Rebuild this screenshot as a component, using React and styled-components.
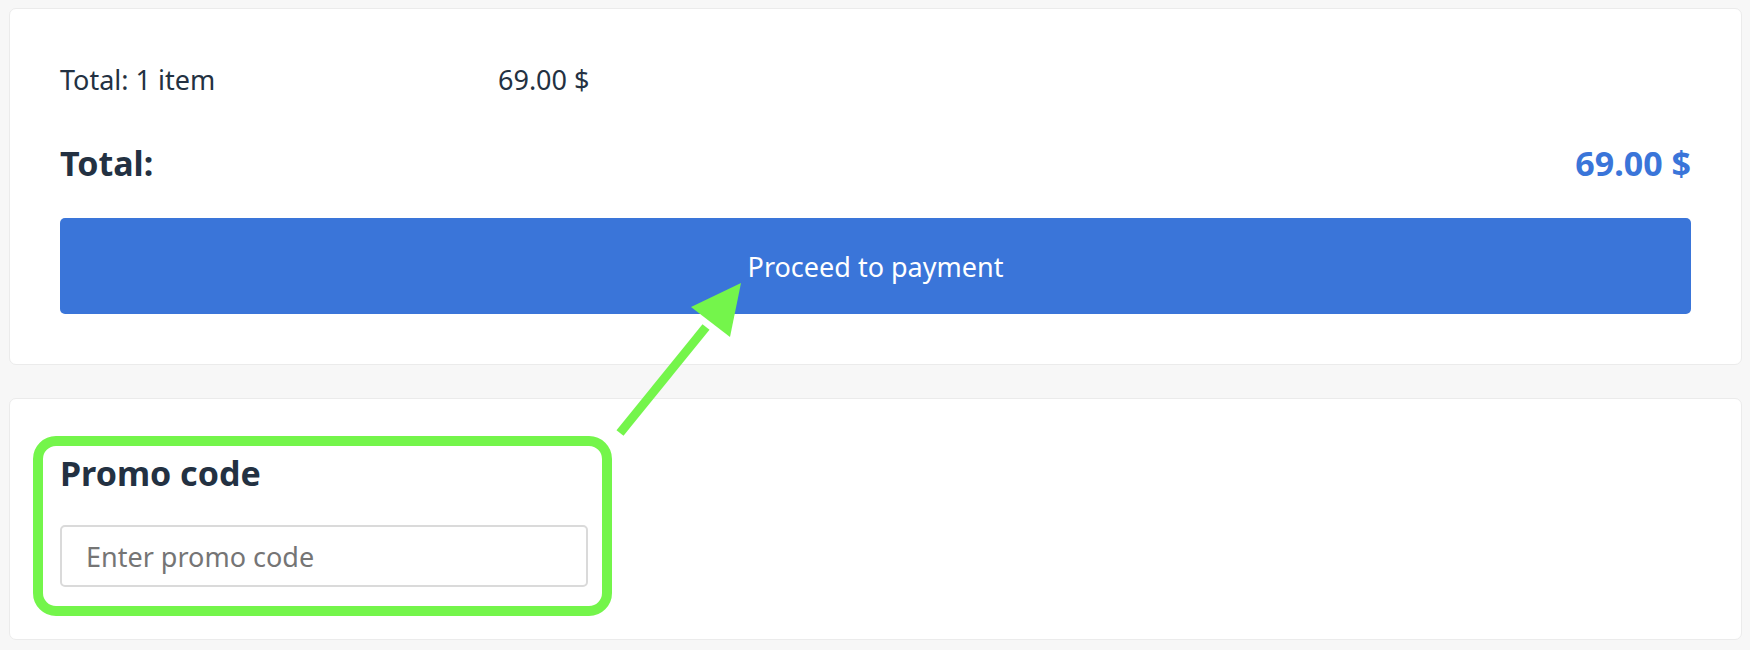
import styled, { createGlobalStyle } from "styled-components";

const GlobalStyle = createGlobalStyle`
  body {
    margin: 0;
    background: #f7f7f7;
    font-family: "Noto Sans", "Open Sans", sans-serif;
    color: #233142;
  }
`;

const Page = styled.div`
  position: relative;
  padding: 8px 8px 8px 9px;
  display: flex;
  flex-direction: column;
  gap: 33px;
`;

const Card = styled.div`
  background: #fff;
  border: 1px solid #ebebeb;
  border-radius: 7px;
  padding: ${(p) => (p.compact ? "48px 50px 52px" : "50px")};
`;

const SummaryRow = styled.div`
  display: grid;
  grid-template-columns: 438px auto;
  font-size: 27px;
  line-height: 42px;
`;

const TotalRow = styled.div`
  display: flex;
  justify-content: space-between;
  margin-top: 36px;
  font-size: 34px;
  font-weight: 700;
  line-height: 52px;
`;

const Amount = styled.span`
  color: ${(p) => (p.accent ? "#3a75d9" : "inherit")};
`;

const PayButton = styled.button`
  display: block;
  width: 100%;
  height: 96px;
  margin-top: 29px;
  background: #3a75d9;
  color: #fff;
  border: none;
  border-radius: 5px;
  font-family: inherit;
  font-size: 27px;
  cursor: pointer;
`;

const PromoTitle = styled.h3`
  margin: 0;
  font-size: 34px;
  font-weight: 700;
  line-height: 52px;
`;

const PromoInput = styled.input`
  display: block;
  box-sizing: border-box;
  width: 528px;
  height: 62px;
  margin-top: 26px;
  padding: 0 24px;
  border: 2px solid #dadada;
  border-radius: 5px;
  font-family: inherit;
  font-size: 27px;
  color: #233142;

  &::placeholder {
    color: #757575;
  }
`;

const Overlay = styled.svg`
  position: absolute;
  top: 0;
  left: 0;
  pointer-events: none;
`;

const App = () => {
  return (
    <>
      <GlobalStyle />
      <Page>
        <Card>
          <SummaryRow>
            <span>Total: 1 item</span>
            <span>69.00 $</span>
          </SummaryRow>
          <TotalRow>
            <span>Total:</span>
            <Amount accent>69.00 $</Amount>
          </TotalRow>
          <PayButton>Proceed to payment</PayButton>
        </Card>
        <Card compact>
          <PromoTitle>Promo code</PromoTitle>
          <PromoInput placeholder="Enter promo code" />
        </Card>
        <Overlay width="1750" height="650" viewBox="0 0 1750 650">
          <rect
            x="38"
            y="441"
            width="569"
            height="170"
            rx="18"
            fill="none"
            stroke="#74f54b"
            strokeWidth="10"
          />
          <line
            x1="620"
            y1="433"
            x2="706"
            y2="327"
            stroke="#74f54b"
            strokeWidth="9"
          />
          <polygon points="741,283 691,307 730,337" fill="#74f54b" />
        </Overlay>
      </Page>
    </>
  );
};

export default App;
